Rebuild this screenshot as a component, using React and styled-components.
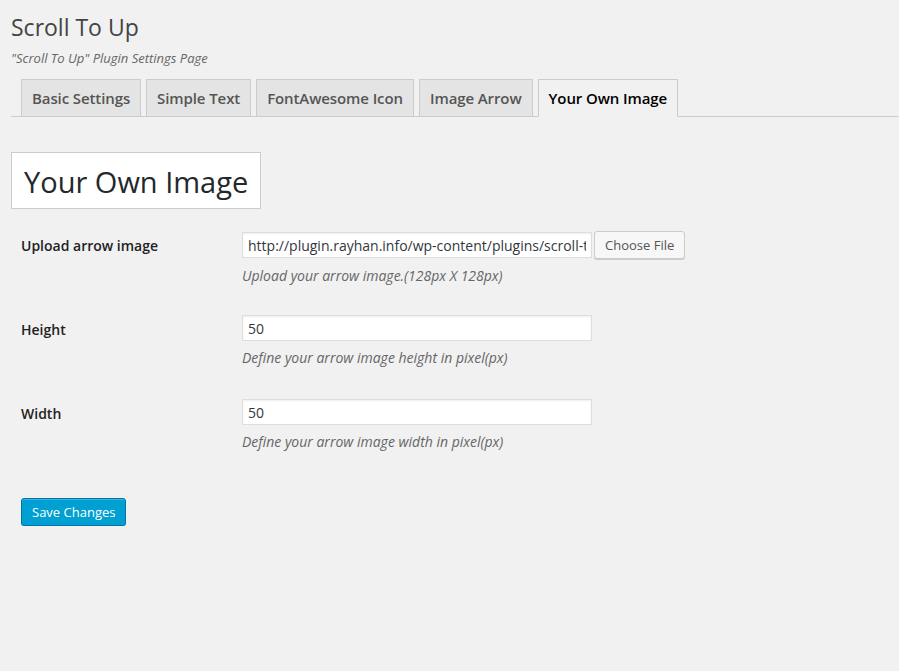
import styled, { createGlobalStyle } from "styled-components";

const GlobalStyle = createGlobalStyle`
  html, body {
    margin: 0;
    background: #f1f1f1;
    font-family: "Open Sans", "Liberation Sans", sans-serif;
    color: #444;
  }
`;

const Wrap = styled.div`
  padding: 11px 0 0 11px;
`;

const Title = styled.h1`
  margin: 0;
  font-size: 23px;
  font-weight: 400;
  line-height: 32px;
  color: #444;
`;

const Subtitle = styled.p`
  margin: 6px 0 0;
  font-size: 13px;
  font-style: italic;
  color: #666;
`;

const TabBar = styled.div`
  display: flex;
  gap: 5px;
  margin-top: 12px;
  padding-left: 10px;
  border-bottom: 1px solid #ccc;
  height: 37px;
`;

const Tab = styled.div`
  display: flex;
  align-items: center;
  padding: 0 10px;
  height: ${(p) => (p.$active ? "38px" : "37px")};
  border: 1px solid #ccc;
  border-bottom: ${(p) => (p.$active ? "1px solid #f1f1f1" : "none")};
  background: ${(p) => (p.$active ? "#f1f1f1" : "#e4e4e4")};
  color: ${(p) => (p.$active ? "#000" : "#555")};
  font-size: 15px;
  font-weight: 600;
  letter-spacing: -0.1px;
  box-sizing: border-box;
  margin-bottom: ${(p) => (p.$active ? "-1px" : "0")};
`;

const SectionBox = styled.div`
  display: inline-block;
  margin-top: 35px;
  padding: 0 12px;
  height: 57px;
  line-height: 57px;
  box-sizing: border-box;
  background: #fff;
  border: 1px solid #ccc;
  font-size: 29px;
  color: #23282d;
`;

const Form = styled.div`
  padding-left: 10px;
  margin-top: 12px;
`;

const Row = styled.div`
  display: flex;
  padding: 10px 0 14px;
  height: 60px;
`;

const Label = styled.div`
  width: 221px;
  flex-shrink: 0;
  font-size: 14px;
  font-weight: 600;
  color: #222;
  padding-top: 7px;
  line-height: 16px;
`;

const Field = styled.div`
  display: flex;
  flex-direction: column;
`;

const InputLine = styled.div`
  display: flex;
  align-items: center;
  gap: 2px;
`;

const TextInput = styled.input`
  width: 350px;
  height: 26px;
  box-sizing: border-box;
  border: 1px solid #ddd;
  box-shadow: inset 0 1px 2px rgba(0, 0, 0, 0.07);
  background: #fff;
  padding: 3px 5px;
  font-family: "Open Sans", "Liberation Sans", sans-serif;
  font-size: 14px;
  color: #32373c;
  outline: none;
`;

const FileButton = styled.button`
  height: 28px;
  padding: 0 10px;
  border: 1px solid #ccc;
  border-radius: 3px;
  background: #f7f7f7;
  box-shadow: 0 1px 0 #ccc;
  font-family: "Open Sans", "Liberation Sans", sans-serif;
  font-size: 13px;
  color: #555;
`;

const Description = styled.p`
  margin: 7px 0 0;
  font-size: 14px;
  font-style: italic;
  color: #666;
`;

const SaveButton = styled.button`
  margin-left: 10px;
  margin-top: 25px;
  height: 28px;
  padding: 0 10px;
  border: 1px solid #0073aa;
  border-radius: 3px;
  background: #00a0d2;
  box-shadow: inset 0 1px 0 rgba(120, 200, 230, 0.5), 0 1px 0 rgba(0, 0, 0, 0.15);
  font-family: "Open Sans", "Liberation Sans", sans-serif;
  font-size: 13px;
  color: #fff;
`;

const tabs = ["Basic Settings", "Simple Text", "FontAwesome Icon", "Image Arrow", "Your Own Image"];

const fields = [
  {
    label: "Upload arrow image",
    value: "http://plugin.rayhan.info/wp-content/plugins/scroll-to-up/img/arrow.png",
    desc: "Upload your arrow image.(128px X 128px)",
    file: true,
  },
  { label: "Height", value: "50", desc: "Define your arrow image height in pixel(px)" },
  { label: "Width", value: "50", desc: "Define your arrow image width in pixel(px)" },
];

export default function App() {
  return (
    <Wrap>
      <GlobalStyle />
      <Title>Scroll To Up</Title>
      <Subtitle>"Scroll To Up" Plugin Settings Page</Subtitle>
      <TabBar>
        {tabs.map((t) => (
          <Tab key={t} $active={t === "Your Own Image"}>
            {t}
          </Tab>
        ))}
      </TabBar>
      <SectionBox>Your Own Image</SectionBox>
      <Form>
        {fields.map((f) => (
          <Row key={f.label}>
            <Label>{f.label}</Label>
            <Field>
              <InputLine>
                <TextInput defaultValue={f.value} readOnly />
                {f.file && <FileButton>Choose File</FileButton>}
              </InputLine>
              <Description>{f.desc}</Description>
            </Field>
          </Row>
        ))}
      </Form>
      <SaveButton>Save Changes</SaveButton>
    </Wrap>
  );
}
